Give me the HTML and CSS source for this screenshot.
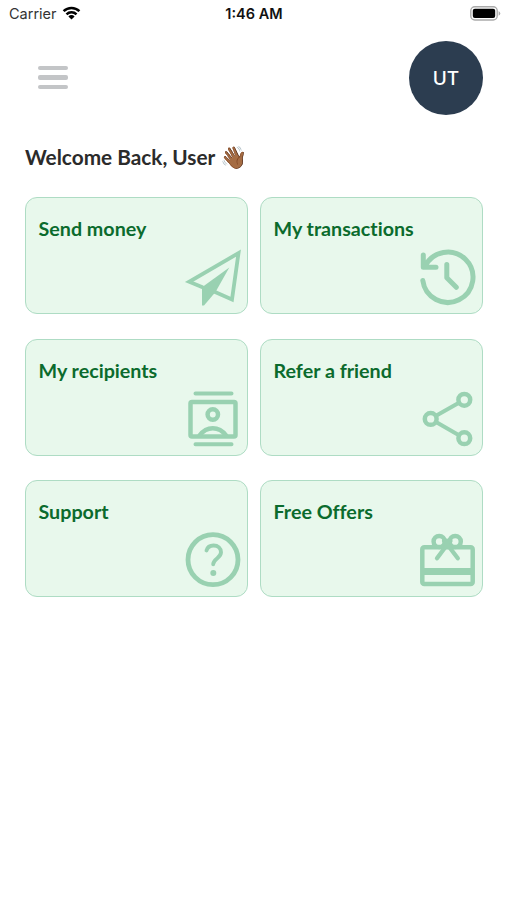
FILE: index.html
```html
<!DOCTYPE html>
<html lang="en">
<head>
    <meta charset="UTF-8">
    <meta name="viewport" content="width=device-width, initial-scale=1.0">
    <title>Home</title>
    <link rel="stylesheet" href="styles.css">
</head>
<body>
    <div class="status-bar">
        <div class="carrier">
            <span>Carrier</span>
            <svg class="wifi" viewBox="0 0 19 14" width="19" height="14">
                <path d="M1.6 5.2a11.2 11.2 0 0 1 15.8 0M4.5 8.3a7 7 0 0 1 10 0" fill="none" stroke="#000" stroke-width="2.5"/>
                <path d="M6.4 10.4a4.4 4.4 0 0 1 6.2 0L9.5 13.6z"/>
            </svg>
        </div>
        <div class="time">1:46 AM</div>
        <div class="battery-wrap">
            <svg viewBox="0 0 31 15" width="31" height="15">
                <rect x=".8" y=".8" width="26.4" height="13.2" rx="4" fill="#fff" stroke="#aaa" stroke-width="1.4"/>
                <rect x="2.8" y="2.8" width="22.4" height="9.2" rx="2"/>
                <path d="M28.6 5q3.4 2.4 0 4.8z" fill="#aaa"/>
            </svg>
        </div>
    </div>

    <header class="header">
        <button class="menu-btn" aria-label="Menu">
            <span></span>
            <span></span>
            <span></span>
        </button>
        <div class="avatar">UT</div>
    </header>

    <h1>Welcome Back, User <span class="wave">👋🏾</span></h1>

    <main class="cards">
        <a class="card">
            <h2>Send money</h2>
            <svg class="icon" viewBox="0 0 60 60">
                <path d="M19.5 39.3 6.2 33.8 55.5 5.1 49 51.5 31.5 43.8" stroke-width="3.8" stroke-linejoin="miter"/>
                <path class="solid" d="M46.3 19.5 19 39.2v18.2l2 .1L32.5 44z"/>
            </svg>
        </a>
        <a class="card">
            <h2>My transactions</h2>
            <svg class="icon" viewBox="0 0 60 60">
                <path d="M5.3 7v12.3H18M7 18.5A25.2 25.2 0 1 1 4.8 32.5M28.8 16.5v13.2l9.5 9.6" stroke-width="5"/>
            </svg>
        </a>
        <a class="card">
            <h2>My recipients</h2>
            <svg class="icon" viewBox="0 0 60 60">
                <path d="M12.5 3.5h36M12.5 54.3h36" stroke-width="4"/>
                <rect x="7.5" y="12" width="45" height="34.5" rx="1.5"/>
                <circle cx="29.8" cy="24.5" r="5.2"/>
                <path d="M16.5 45.5q5.5-7.3 13.3-7.3t13.4 7.3"/>
            </svg>
        </a>
        <a class="card">
            <h2>Refer a friend</h2>
            <svg class="icon" viewBox="0 0 60 60">
                <circle cx="46.3" cy="9.8" r="5.9"/>
                <circle cx="12.7" cy="28.9" r="5.9"/>
                <circle cx="46.3" cy="48.2" r="5.9"/>
                <path d="M18 25.8 41 12.8M18 32l23 13.2" stroke-width="4"/>
            </svg>
        </a>
        <a class="card">
            <h2>Support</h2>
            <svg class="icon" viewBox="0 0 60 60">
                <circle cx="30" cy="28.7" r="25" stroke-width="4.8"/>
                <path d="M23.5 19.5c1-3.5 3.5-5 7-5 4.5 0 7.5 2.8 7.5 6.8 0 6-7.800 6.200-7.800 12" stroke-width="3.9"/>
                <circle class="solid" cx="30.3" cy="42" r="3"/>
            </svg>
        </a>
        <a class="card">
            <h2>Free Offers</h2>
            <svg class="icon" viewBox="0 0 60 60">
                <rect x="4.3" y="16.3" width="50.4" height="36.8" rx="2"/>
                <path class="solid" d="M4 37h51v7H4z"/>
                <circle cx="21.2" cy="10.5" r="5.6"/>
                <circle cx="37.2" cy="10.5" r="5.6"/>
                <path d="M26 10h6.5M29.3 13.5 19 27.3M29.3 13.5l10.5 13.8" stroke-width="4.3"/>
            </svg>
        </a>
    </main>
</body>
</html>
```

FILE: styles.css
```css
* { box-sizing: border-box; }
body {
    margin: 0;
    padding: 0 24px 0 25px;
    min-height: 900px;
    background: #fff;
    font-family: Lato, sans-serif;
}

/* status bar */
.status-bar {
    display: grid;
    grid-template-columns: 1fr auto 1fr;
    align-items: center;
    height: 27px;
    margin: 0 -18px 0 -16px;
    font-family: Inter, sans-serif;
    font-size: 14.5px;
    color: #111;
}
.carrier {
    display: flex;
    align-items: center;
    gap: 5px;
    color: #333;
}
.wifi { margin-top: -2px; }
.time {
    margin-left: -2px;
    font-weight: 600;
}
.battery-wrap {
    display: flex;
    justify-content: flex-end;
    margin-top: -1px;
}

/* header */
.header {
    display: flex;
    justify-content: space-between;
    align-items: center;
    height: 74px;
    margin-top: 13.5px;
}
.menu-btn {
    display: flex;
    flex-direction: column;
    gap: 5px;
    margin-left: 13px;
    padding: 0;
    border: none;
    background: none;
}
.menu-btn span {
    width: 30px;
    height: 4.5px;
    border-radius: 2px;
    background: #c3c5c7;
}
.avatar {
    display: flex;
    align-items: center;
    justify-content: center;
    width: 74px;
    height: 74px;
    padding-top: 1px;
    border-radius: 50%;
    background: #2c3d50;
    color: #fff;
    font-family: Inter, sans-serif;
    font-size: 19px;
    font-weight: 500;
}

h1 {
    height: 30px;
    margin: 27px 0 25.5px;
    font-size: 20.8px;
    font-weight: 700;
    line-height: 30px;
    color: #2b2b2b;
    white-space: nowrap;
}
.wave { font-size: 22px; }

/* cards */
.cards {
    display: grid;
    grid-template-columns: 1fr 1fr;
    gap: 24.5px 12px;
}
.card {
    display: flex;
    flex-direction: column;
    justify-content: space-between;
    height: 117px;
    padding: 18px 4px 5px 12.5px;
    border: 1.5px solid #aedcc4;
    border-radius: 12px;
    background: #e8f8ec;
}
.card h2 {
    margin: 0;
    font-size: 19.7px;
    font-weight: 700;
    font-variant-ligatures: none;
    line-height: 26px;
    color: #0b6b2d;
}
.icon {
    align-self: flex-end;
    width: 60px;
    height: 60px;
    fill: none;
    stroke: #99d1b1;
    stroke-width: 4.5;
    stroke-linecap: round;
    stroke-linejoin: round;
}
.icon .solid {
    fill: #99d1b1;
    stroke: none;
}
```
